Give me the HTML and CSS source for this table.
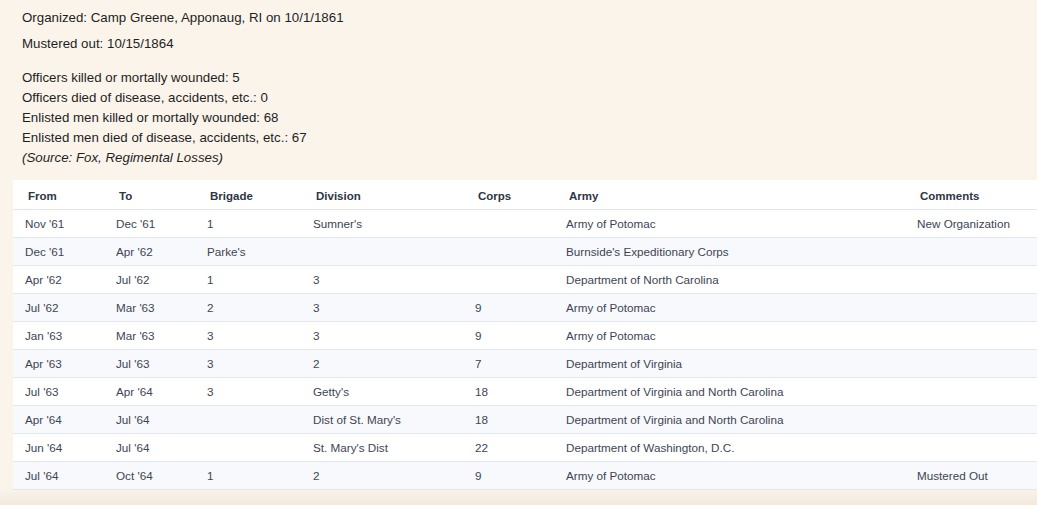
FILE: index.html
```html
<!DOCTYPE html>
<html>
<head>
<meta charset="utf-8">
<link rel="stylesheet" href="styles.css">
</head>
<body>
<div class="page">
  <section class="info">
    <p class="line">Organized: Camp Greene, Apponaug, RI on 10/1/1861</p>
    <p class="line">Mustered out: 10/15/1864</p>
    <div class="losses">
      <div>Officers killed or mortally wounded: 5</div>
      <div>Officers died of disease, accidents, etc.: 0</div>
      <div>Enlisted men killed or mortally wounded: 68</div>
      <div>Enlisted men died of disease, accidents, etc.: 67</div>
      <div class="source">(Source: Fox, Regimental Losses)</div>
    </div>
  </section>
  <div class="table-wrap">
    <table class="assign">
      <colgroup>
        <col class="c-from"><col class="c-to"><col class="c-brig"><col class="c-div"><col class="c-corps"><col class="c-army"><col class="c-comm">
      </colgroup>
      <thead>
        <tr><th>From</th><th>To</th><th>Brigade</th><th>Division</th><th>Corps</th><th>Army</th><th>Comments</th></tr>
      </thead>
      <tbody>
        <tr><td>Nov '61</td><td>Dec '61</td><td>1</td><td>Sumner's</td><td></td><td>Army of Potomac</td><td>New Organization</td></tr>
        <tr><td>Dec '61</td><td>Apr '62</td><td>Parke's</td><td></td><td></td><td>Burnside's Expeditionary Corps</td><td></td></tr>
        <tr><td>Apr '62</td><td>Jul '62</td><td>1</td><td>3</td><td></td><td>Department of North Carolina</td><td></td></tr>
        <tr><td>Jul '62</td><td>Mar '63</td><td>2</td><td>3</td><td>9</td><td>Army of Potomac</td><td></td></tr>
        <tr><td>Jan '63</td><td>Mar '63</td><td>3</td><td>3</td><td>9</td><td>Army of Potomac</td><td></td></tr>
        <tr><td>Apr '63</td><td>Jul '63</td><td>3</td><td>2</td><td>7</td><td>Department of Virginia</td><td></td></tr>
        <tr><td>Jul '63</td><td>Apr '64</td><td>3</td><td>Getty's</td><td>18</td><td>Department of Virginia and North Carolina</td><td></td></tr>
        <tr><td>Apr '64</td><td>Jul '64</td><td></td><td>Dist of St. Mary's</td><td>18</td><td>Department of Virginia and North Carolina</td><td></td></tr>
        <tr><td>Jun '64</td><td>Jul '64</td><td></td><td>St. Mary's Dist</td><td>22</td><td>Department of Washington, D.C.</td><td></td></tr>
        <tr><td>Jul '64</td><td>Oct '64</td><td>1</td><td>2</td><td>9</td><td>Army of Potomac</td><td>Mustered Out</td></tr>
      </tbody>
    </table>
  </div>
</div>
</body>
</html>
```

FILE: styles.css
```css
html, body {
  margin: 0;
  padding: 0;
}
body {
  background: linear-gradient(to bottom, #faf4eb 0, #faf4eb 488px, #f2e9dd 505px);
  font-family: "Liberation Sans", Arial, sans-serif;
  color: #1f1f1f;
  overflow: hidden;
  height: 505px;
}
.page {
  padding: 10px 0 0 13px;
}
.info {
  padding-left: 9px;
  font-size: 13.3px;
}
.line {
  margin: 0;
  line-height: 16px;
}
.info .line:first-child {
  margin-bottom: 10px;
}
.losses {
  margin-top: 16px;
  line-height: 20px;
}
.source {
  font-style: italic;
}
.table-wrap {
  margin-top: 12px;
  overflow: hidden;
}
.assign {
  width: 1060px;
  table-layout: fixed;
  border-collapse: collapse;
  background: #ffffff;
  font-size: 11.7px;
  color: #3d4553;
}
.c-from, .c-to, .c-corps { width: 91px; }
.c-brig { width: 106px; }
.c-div { width: 162px; }
.c-army { width: 351px; }
.assign th {
  text-align: left;
  font-weight: bold;
  font-size: 11.5px;
  color: #2d3644;
  height: 26px;
  padding: 3px 0 0 15px;
  border-bottom: 1px solid #e1e7ef;
}
.assign td {
  height: 27px;
  padding: 0 0 0 12px;
  border-bottom: 1px solid #e1e7ef;
  white-space: nowrap;
}
.assign tbody tr:nth-child(even) {
  background: #f7f9fc;
}
```
